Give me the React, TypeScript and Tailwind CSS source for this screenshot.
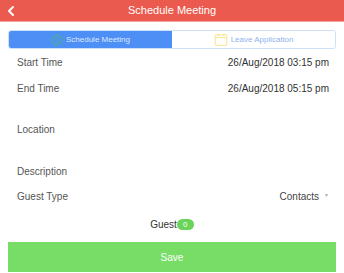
import { ChevronLeft } from 'lucide-react'

function GlobeIcon() {
  return (
    <svg width="12" height="12" viewBox="0 0 24 24" fill="none" stroke="#4fb08a" strokeWidth="2">
      <circle cx="12" cy="12" r="10" />
      <path d="M5 6c3 1 3 4 6 4s1 4 3 5 1 4 0 6" />
      <path d="M15 3c-1 2 1 3 3 3s2 3 4 4" />
    </svg>
  )
}

function CalendarIcon() {
  return (
    <svg width="14" height="13" viewBox="0 0 24 22" fill="none" stroke="#f3e27a" strokeWidth="1.5">
      <rect x="2" y="3" width="20" height="18" rx="1" />
      <path d="M2 8h20M7 1v4M17 1v4" />
    </svg>
  )
}

function Row({ label, value, className }: { label: string; value?: React.ReactNode; className: string }) {
  return (
    <div className={`flex items-center justify-between pl-[17px] pr-[15px] text-[10px] ${className}`}>
      <span className="text-[#555]">{label}</span>
      {value !== undefined && <span className="text-[#333]">{value}</span>}
    </div>
  )
}

export default function App() {
  return (
    <div className="w-[344px] h-[273px] bg-white flex flex-col overflow-hidden" style={{ fontFamily: '"Liberation Sans", Arial, sans-serif' }}>
      <header className="h-[22px] bg-[#eb5a4e] border-b border-[#f3a39c] flex items-center relative shrink-0">
        <ChevronLeft className="absolute left-[3px] text-white" size={16} strokeWidth={3} />
        <h1 className="flex-1 text-center text-white text-[11px]">Schedule Meeting</h1>
      </header>

      <div className="mx-[8px] mt-[8px] h-[19px] flex rounded-[3px] border border-[#cfe0fb] overflow-hidden shrink-0">
        <div className="flex-1 bg-[#4d8ff5] flex items-center justify-center gap-[3px] text-[8px] text-[#dfe9ff]">
          <GlobeIcon />
          Schedule Meeting
        </div>
        <div className="flex-1 bg-white flex items-center justify-center gap-[3px] text-[8px] text-[#8fb2ee]">
          <CalendarIcon />
          Leave Application
        </div>
      </div>

      <Row className="h-[26px]" label="Start Time" value="26/Aug/2018 03:15 pm" />
      <Row className="h-[26px]" label="End Time" value="26/Aug/2018 05:15 pm" />
      <Row className="h-[56px]" label="Location" />
      <Row className="h-[28px]" label="Description" />
      <Row
        className="h-[22px]"
        label="Guest Type"
        value={
          <span className="flex items-center gap-[5px] text-[#444]">
            Contacts
            <span className="text-[5px] text-[#aaa]">▼</span>
          </span>
        }
      />

      <div className="h-[35px] flex items-center justify-center text-[10px] text-[#333]">
        Guest
        <span className="w-[17px] h-[11px] rounded-full bg-[#6ad35a] text-white text-[8px] flex items-center justify-center">0</span>
      </div>

      <button className="mx-[8px] h-[30px] bg-[#77dd66] text-white text-[10px] shrink-0">Save</button>
    </div>
  )
}
